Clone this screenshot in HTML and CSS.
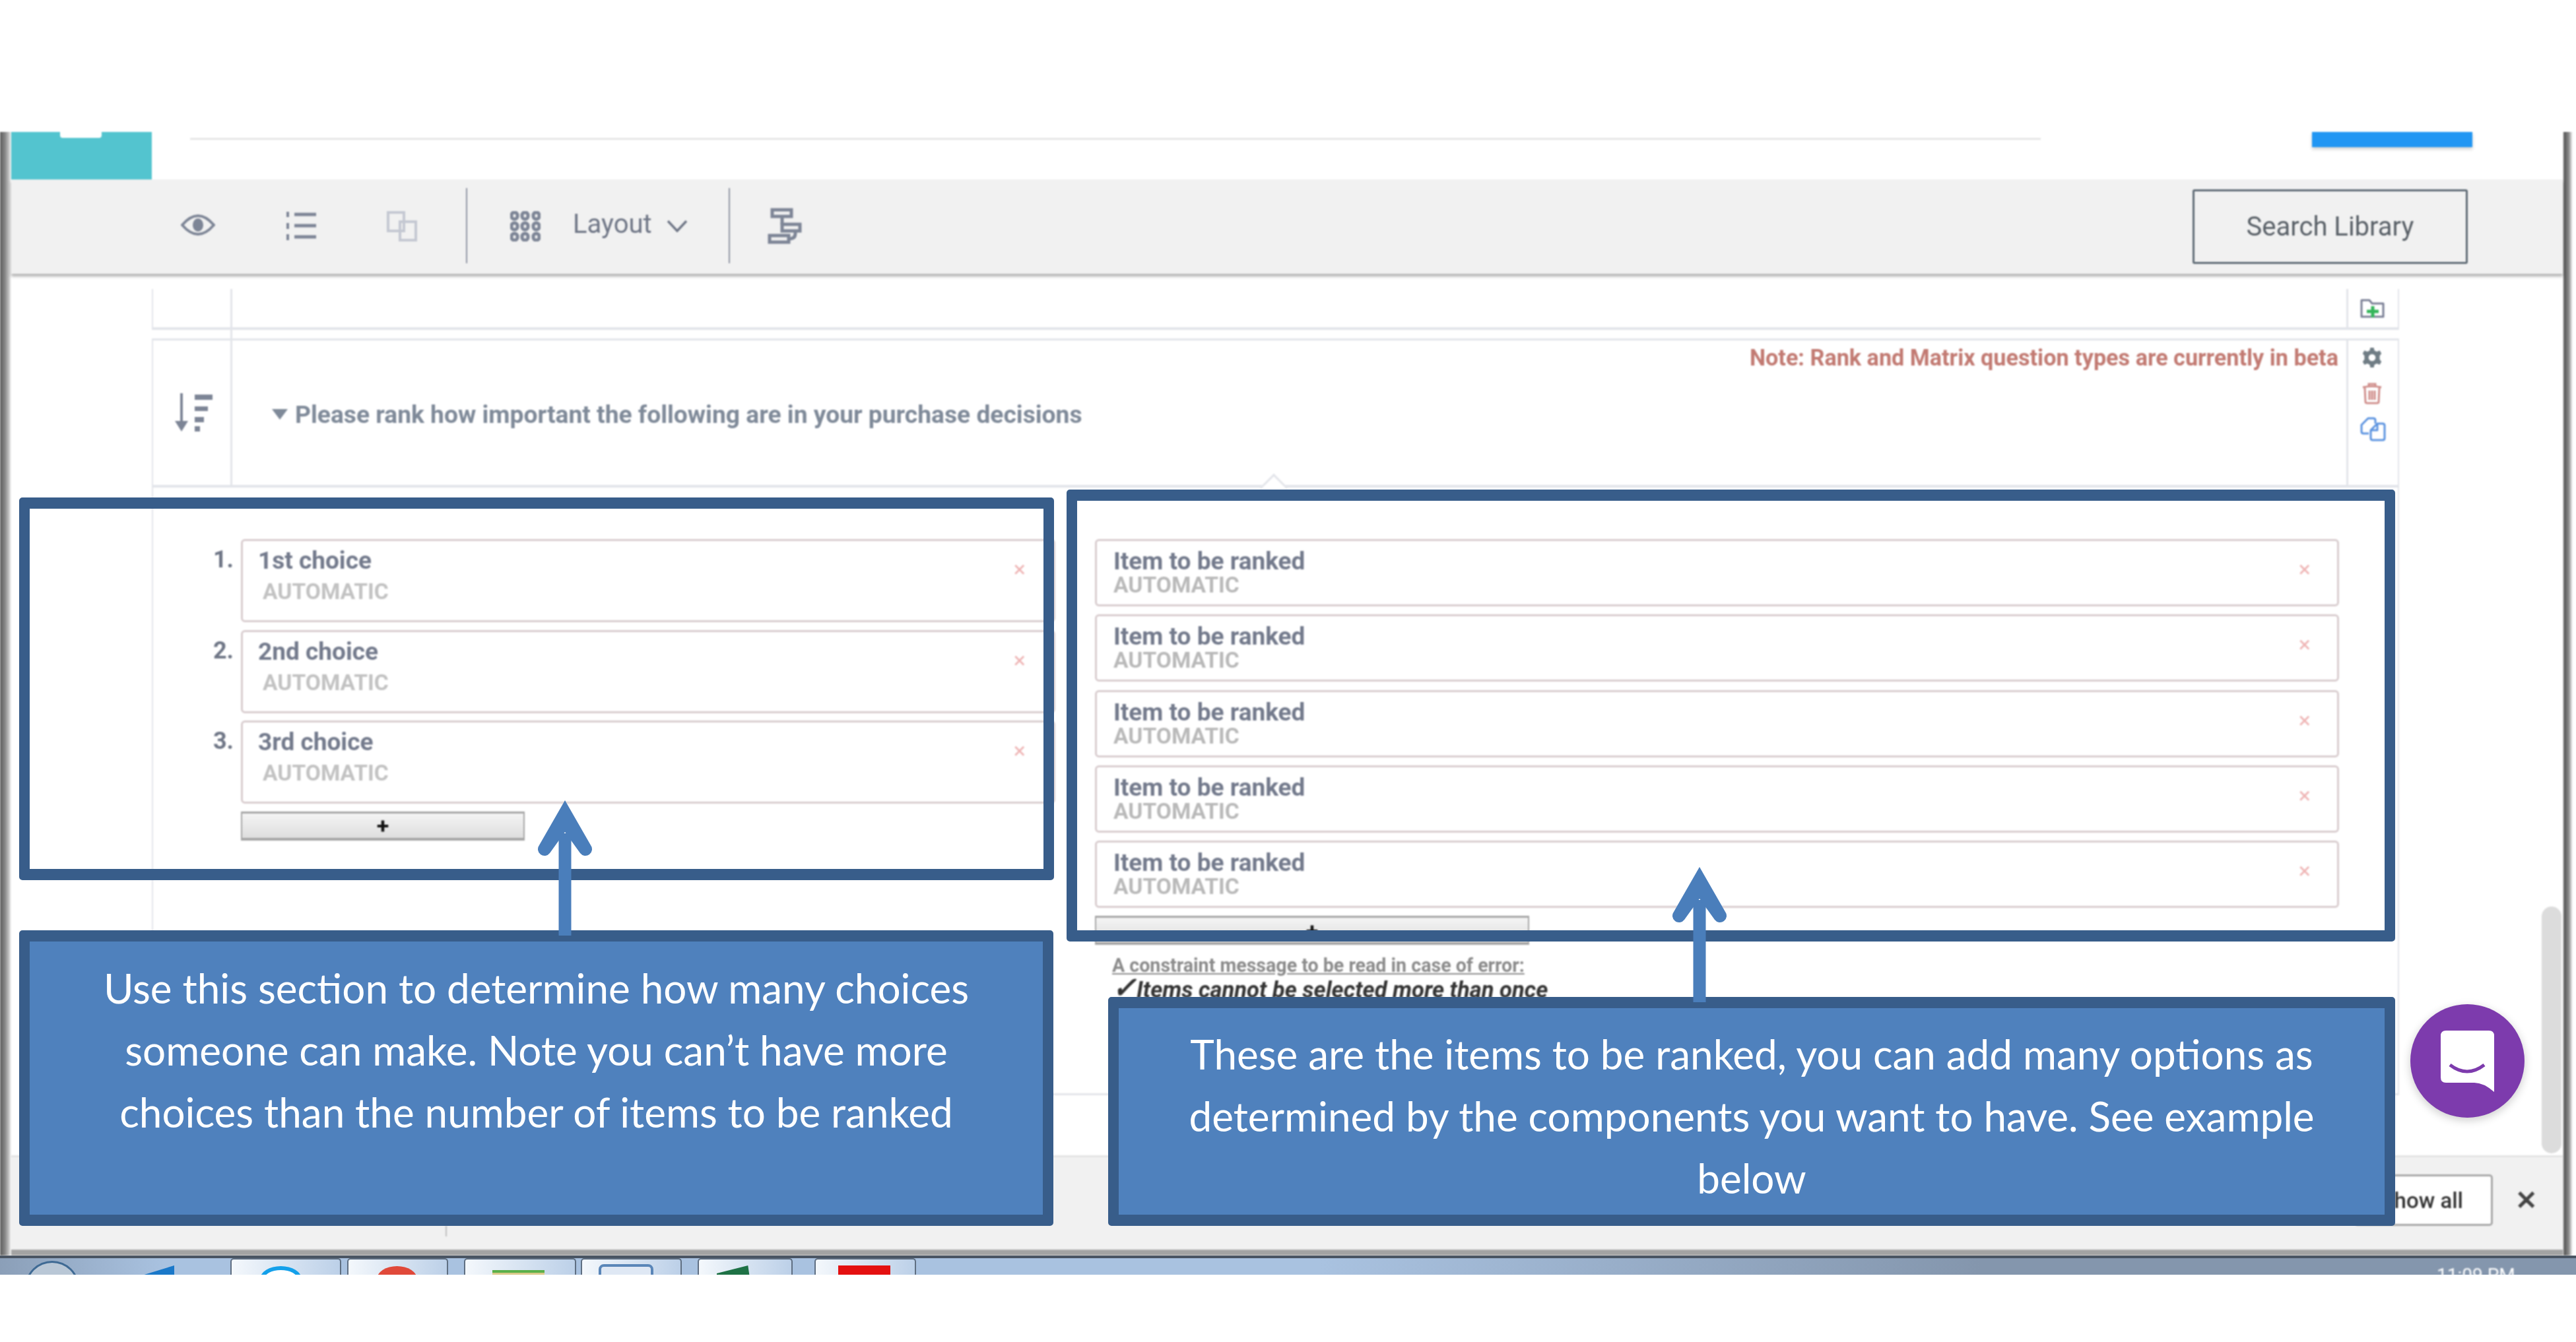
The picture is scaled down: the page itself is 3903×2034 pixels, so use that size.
FILE: index.html
```html
<!DOCTYPE html>
<html lang="en">
<head>
    <meta charset="UTF-8">
    <title>Rank question setup</title>
    <link rel="stylesheet" href="styles.css">
</head>
<body>
<div class="page">
    <div class="window">
        <div class="top-strip">
            <div class="teal-tab"><span class="teal-notch"></span></div>
            <div class="top-line"></div>
            <div class="blue-btn"></div>
        </div>
        <div class="toolbar">
            <svg class="ico ico-eye" viewBox="0 0 52 32"><path d="M2 16 Q14 2 26 2 Q38 2 50 16 Q38 30 26 30 Q14 30 2 16Z" fill="none" stroke="#7d8596" stroke-width="4"/><ellipse cx="26" cy="16" rx="8" ry="10" fill="#7d8596"/></svg>
            <svg class="ico ico-list" viewBox="0 0 45 43"><path d="M2 0v8M2 17v9M2 34v9" stroke="#7d8596" stroke-width="4"/><path d="M12 4h33M12 21h33M12 38h33" stroke="#7d8596" stroke-width="5"/></svg>
            <svg class="ico ico-copy" viewBox="0 0 46 46"><path d="M2 2h24v28H2zM20 16h24v28H20z" fill="none" stroke="#c4c8d2" stroke-width="4"/></svg>
            <span class="tool-sep sep-a"></span>
            <svg class="ico ico-grid" viewBox="0 0 46 46" fill="none" stroke="#7d8596" stroke-width="5"><rect x="2" y="2" width="9" height="10" rx="4"/><rect x="18" y="2" width="9" height="10" rx="4"/><rect x="35" y="2" width="9" height="10" rx="4"/><rect x="2" y="18" width="9" height="10" rx="4"/><rect x="18" y="18" width="9" height="10" rx="4"/><rect x="35" y="18" width="9" height="10" rx="4"/><rect x="2" y="34" width="9" height="10" rx="4"/><rect x="18" y="34" width="9" height="10" rx="4"/><rect x="35" y="34" width="9" height="10" rx="4"/></svg>
            <span class="layout-label">Layout</span>
            <svg class="ico ico-chev" viewBox="0 0 32 19"><path d="M2 2l14 15L30 2" fill="none" stroke="#6f7686" stroke-width="3.5"/></svg>
            <span class="tool-sep sep-b"></span>
            <svg class="ico ico-flow" viewBox="0 0 52 55" fill="none" stroke="#7d8596" stroke-width="5"><rect x="7" y="3" width="29" height="10"/><rect x="22" y="25" width="27" height="10"/><rect x="3" y="42" width="29" height="10"/><path d="M22 13v12M42 35v4q0 8-10 8"/></svg>
            <button class="search-btn">Search Library</button>
        </div>
        <div class="content">
            <div class="survey">
                <div class="q-row q-row-short">
                    <div class="q-type"></div>
                    <div class="q-body"></div>
                    <div class="q-actions">
                        <svg class="ico-folder" viewBox="0 0 37 30"><path d="M2 28V3h12l4 5h17v20z" fill="none" stroke="#7a7f95" stroke-width="3" stroke-linejoin="round"/><path d="M19 12v17M10 20h18" stroke="#34b55a" stroke-width="5"/></svg>
                    </div>
                </div>
                <div class="q-row q-row-tall">
                    <div class="q-type">
                        <svg class="ico-sort" viewBox="0 0 57 58"><path d="M10 0v48" stroke="#7d8596" stroke-width="4"/><path d="M0 42h20L10 58z" fill="#7d8596"/><path d="M30 2h27v8H30zM30 20h20v7H30zM30 36h14v8H30zM30 50h8v8h-8z" fill="#7d8596"/></svg>
                    </div>
                    <div class="q-body">
                        <div class="q-note">Note: Rank and Matrix question types are currently in beta</div>
                        <div class="q-title"><span class="q-caret"></span>Please rank how important the following are in your purchase decisions</div>
                    </div>
                    <div class="q-actions q-actions-col">
                        <svg class="ico-gear" viewBox="0 0 36 36"><path d="M15 1h6l1 5 4 2 5-2 3 5-3 4v6l3 4-3 5-5-2-4 2-1 5h-6l-1-5-4-2-5 2-3-5 3-4v-6l-3-4 3-5 5 2 4-2z" fill="#707d85"/><circle cx="18" cy="18" r="6" fill="#fff"/></svg>
                        <svg class="ico-trash" viewBox="0 0 30 33" fill="none" stroke="#d08f8c" stroke-width="3"><path d="M1 7q14-3 28 0M10 5V2h10v3M4 8l1 21q0 2 3 2h14q3 0 3-2l1-21M11 12v14M19 12v14M15 12v14"/></svg>
                        <svg class="ico-dup" viewBox="0 0 40 37" fill="none" stroke="#5b93e0" stroke-width="3" stroke-linejoin="round"><path d="M14 25H6q-3 0-3-3V12L13 2h8q3 0 3 3v5"/><path d="M17 20L27 10h8q3 0 3 3v19q0 3-3 3H20q-3 0-3-3z"/><path d="M27 10v10H17"/></svg>
                    </div>
                    <span class="q-tip"></span>
                </div>
                <div class="rank-panel">
                    <div class="choices">
                        <div class="choice-row">
                            <span class="choice-num">1.</span>
                            <div class="choice-box"><div class="c-label">1st choice</div><div class="c-auto">AUTOMATIC</div><span class="c-x">×</span></div>
                        </div>
                        <div class="choice-row">
                            <span class="choice-num">2.</span>
                            <div class="choice-box"><div class="c-label">2nd choice</div><div class="c-auto">AUTOMATIC</div><span class="c-x">×</span></div>
                        </div>
                        <div class="choice-row">
                            <span class="choice-num">3.</span>
                            <div class="choice-box"><div class="c-label">3rd choice</div><div class="c-auto">AUTOMATIC</div><span class="c-x">×</span></div>
                        </div>
                        <button class="add-btn add-choice">+</button>
                    </div>
                    <div class="items">
                        <div class="item-box"><div class="i-label">Item to be ranked</div><div class="i-auto">AUTOMATIC</div><span class="c-x">×</span></div>
                        <div class="item-box"><div class="i-label">Item to be ranked</div><div class="i-auto">AUTOMATIC</div><span class="c-x">×</span></div>
                        <div class="item-box"><div class="i-label">Item to be ranked</div><div class="i-auto">AUTOMATIC</div><span class="c-x">×</span></div>
                        <div class="item-box"><div class="i-label">Item to be ranked</div><div class="i-auto">AUTOMATIC</div><span class="c-x">×</span></div>
                        <div class="item-box"><div class="i-label">Item to be ranked</div><div class="i-auto">AUTOMATIC</div><span class="c-x">×</span></div>
                        <button class="add-btn add-item">+</button>
                        <div class="constraint">A constraint message to be read in case of error:</div>
                        <div class="constraint-rule"><span class="rule-check">✓</span>Items cannot be selected more than once</div>
                    </div>
                </div>
            </div>
            <div class="scroll-thumb"></div>
        </div>
        <div class="bottom-bar">
            <span class="bar-tick"></span>
            <button class="show-all">Show all</button>
            <span class="bar-close">✕</span>
        </div>
    </div>
    <div class="taskbar">
        <span class="orb"></span>
        <span class="tb-flag"></span>
        <span class="tb-btn tb-1"><i class="tb-ico i-sky"></i></span>
        <span class="tb-btn tb-2"><i class="tb-ico i-red"></i></span>
        <span class="tb-btn tb-3"><i class="tb-ico i-folder"></i></span>
        <span class="tb-btn tb-4"><i class="tb-ico i-word"></i></span>
        <span class="tb-btn tb-5"><i class="tb-ico i-excel"></i></span>
        <span class="tb-btn tb-6"><i class="tb-ico i-acro"></i></span>
        <span class="tb-clock">11:09 PM</span>
    </div>

    <!-- annotation boxes laid over the screenshot -->
    <div class="outline outline-left"></div>
    <div class="outline outline-right"></div>
    <div class="callout callout-left">Use this section to determine how many choices someone can make. Note you can’t have more choices than the number of items to be ranked</div>
    <div class="callout callout-right">These are the items to be ranked, you can add many options as determined by the components you want to have. See example below</div>
    <svg class="arrow arrow-left" viewBox="0 0 90 206"><path d="M45 50V205" stroke="#4a7ebb" stroke-width="19"/><path d="M45 0L84 68A9 9 0 0 1 68 80L45 48 22 80A9 9 0 0 1 6 68Z" fill="#4a7ebb"/></svg>
    <svg class="arrow arrow-right" viewBox="0 0 90 206"><path d="M45 50V205" stroke="#4a7ebb" stroke-width="19"/><path d="M45 0L84 68A9 9 0 0 1 68 80L45 48 22 80A9 9 0 0 1 6 68Z" fill="#4a7ebb"/></svg>
    <div class="chat-bubble">
        <svg viewBox="0 0 81 93"><path d="M8 0h65q8 0 8 8v85q-16-14-30-14H8q-8 0-8-8V8q0-8 8-8z" fill="#fff"/><path d="M14 52q26 20 52 0" fill="none" stroke="#7d3bad" stroke-width="5"/></svg>
    </div>
</div>
</body>
</html>
```

FILE: styles.css
```css
* { box-sizing: border-box; }
html, body { margin: 0; padding: 0; background: #fff; }
body { font-family: Roboto, "Liberation Sans", sans-serif; }

.page { position: relative; width: 3903px; height: 2034px; padding-top: 200px; overflow: hidden; }

/* browser window */
.window {
    display: flex;
    flex-direction: column;
    height: 1703px;
    padding: 0 20px 0 17px;
    background: linear-gradient(90deg, #5a5a5a 0, #8a8a8a 8px, #c8c8c8 14px, #fff 17px, #fff 3883px, #555 3885px, #8a8a8a 3892px, #fff 3898px);
    filter: blur(1.1px);
}
.top-strip { display: flex; align-items: flex-start; height: 72px; background: #fff; }
.teal-tab { position: relative; width: 213px; height: 72px; background: #53c4cf; }
.teal-notch { position: absolute; left: 74px; top: 0; width: 63px; height: 9px; background: #fff; border-radius: 0 0 4px 4px; }
.top-line { width: 2804px; height: 3px; margin: 9px 0 0 58px; background: #e6e6e6; }
.blue-btn { width: 243px; height: 23px; margin-left: 411px; background: #2196f3; box-shadow: 0 3px 5px rgba(0,0,0,.2); }

.toolbar {
    display: flex;
    align-items: center;
    height: 143px;
    padding-left: 257px;
    background: #f1f1f1;
    box-shadow: 0 4px 4px rgba(0,0,0,.3);
    position: relative;
    z-index: 1;
}
.ico { flex: none; display: block; }
.ico-eye { width: 52px; height: 32px; margin-top: -6px; }
.ico-list { width: 45px; height: 43px; margin-left: 108px; margin-top: -3px; }
.ico-copy { width: 46px; height: 46px; margin-left: 107px; margin-top: -2px; }
.tool-sep { flex: none; width: 2px; height: 114px; background: #8f94a3; margin-top: -3px; }
.sep-a { margin-left: 74px; }
.ico-grid { width: 46px; height: 46px; margin-left: 65px; margin-top: -2px; }
.layout-label { margin-left: 49px; font-size: 40px; color: #6f7686; margin-top: -8px; }
.ico-chev { width: 32px; height: 19px; margin-left: 22px; margin-top: -2px; }
.sep-b { margin-left: 62px; }
.ico-flow { width: 52px; height: 55px; margin-left: 57px; margin-top: -3px; }
.search-btn {
    width: 417px;
    height: 113px;
    margin-left: auto;
    margin-right: 144px;
    background: #f1f1f1;
    border: 3px solid #5f6b75;
    border-radius: 3px;
    font-family: Roboto, sans-serif;
    font-size: 40px;
    color: #5a6168;
}

/* survey */
.content { position: relative; flex: 1; background: #fff; padding: 23px 0 0 213px; }
.survey { width: 3405px; }
.q-row { position: relative; display: flex; border: 3px solid #e3e5ea; border-width: 0 2px 4px 2px; }
.q-row-short { height: 62px; margin-bottom: 13px; }
.q-row-tall { height: 226px; border-top-width: 3px; }
.q-type { flex: none; width: 120px; border-right: 3px solid #e3e5ea; padding: 80px 0 0 33px; }
.ico-sort { display: block; width: 57px; height: 58px; }
.q-body { flex: 1; position: relative; padding: 0 12px; }
.q-note { text-align: right; font-size: 34.2px; font-weight: 700; color: #c27a72; padding-top: 6px; line-height: 40px; }
.q-title { display: flex; align-items: center; margin: 44px 0 0 48px; font-size: 37.2px; font-weight: 700; color: #7f8a99; line-height: 44px; }
.q-caret { width: 0; height: 0; margin-right: 11px; border: 12px solid transparent; border-top: 16px solid #7f8a99; border-bottom: 0; }
.q-actions { flex: none; width: 78px; border-left: 3px solid #e3e5ea; padding: 14px 0 0 18px; }
.ico-folder { display: block; width: 37px; height: 30px; }
.q-actions-col { padding-top: 10px; }
.ico-gear { display: block; width: 36px; height: 32px; margin-left: 0; }
.ico-trash { display: block; width: 30px; height: 33px; margin: 22px 0 0 3px; }
.ico-dup { display: block; width: 40px; height: 37px; margin: 19px 0 0 -1px; }
.q-tip { position: absolute; left: 1683px; bottom: -4px; width: 30px; height: 30px; background: #fff; border: solid #e3e5ea; border-width: 3px 0 0 3px; transform: translateY(15px) rotate(45deg); }

.rank-panel { display: flex; height: 921px; border: solid #e3e5ea; border-width: 0 2px 3px 2px; padding-top: 78px; }
.choices { flex: none; width: 1365px; }
.choice-row { display: flex; margin-bottom: 11.5px; }
.choice-num { flex: none; width: 133px; text-align: right; padding: 10px 11px 0 0; font-size: 36px; font-weight: 700; color: #6f7686; }
.choice-box, .item-box { position: relative; border: 3px solid #d9cdcf; border-radius: 6px; background: #fff; }
.choice-box { flex: 1; height: 126px; padding: 8px 0 0 23px; margin-right: -2px; }
.c-label { font-size: 37px; font-weight: 700; color: #737a8c; line-height: 44px; }
.c-auto { font-size: 33.6px; font-weight: 700; color: #c2c2c2; line-height: 38px; margin: 6px 0 0 7px; }
.c-x { position: absolute; right: 42px; top: 25px; font-size: 34px; line-height: 34px; color: #efb6b6; }
.add-btn {
    display: block;
    background: linear-gradient(#f4f4f4, #dedede);
    border: 1px solid #a5a5a5;
    border-width: 3px 2px 4px;
    font-size: 34px;
    font-weight: 700;
    line-height: 26px;
    color: #111;
    font-family: Roboto, sans-serif;
    padding: 0;
}
.add-choice { width: 430px; height: 44px; margin-left: 133px; }
.items { flex: 1; margin-left: 62px; padding-right: 89px; }
.item-box { height: 102px; margin-bottom: 12.3px; padding: 9px 0 0 25px; }
.i-label { font-size: 37px; font-weight: 700; color: #737a8c; line-height: 44px; }
.i-auto { font-size: 33.6px; font-weight: 700; color: #b9b9b9; line-height: 28px; }
.item-box .c-x { right: 40px; top: 25px; }
.add-item { width: 658px; height: 44px; }
.constraint { width: max-content; margin: 14px 0 0 26px; font-size: 28.6px; font-weight: 700; line-height: 34px; color: #8b8b8b; text-decoration: underline; }
.constraint-rule { margin: 2px 0 0 26px; font-size: 34.6px; font-weight: 700; font-style: italic; line-height: 36px; color: #333; }
.rule-check { font-size: 44px; line-height: 0; }

.scroll-thumb { position: absolute; left: 3834px; top: 959px; width: 30px; height: 374px; border-radius: 15px; background: #dcdcdc; }

/* download bar */
.bottom-bar { position: relative; display: flex; align-items: center; justify-content: flex-end; height: 152px; padding: 0 36px 10px 0; background: #f1f1f1; border-top: 3px solid #e4e4e4; border-bottom: 9px solid #a3a3a3; }
.bar-tick { position: absolute; left: 658px; top: 104px; width: 2px; height: 16px; background: #bdbdbd; }
.show-all { width: 210px; height: 78px; padding: 0 42px 0 0; text-align: right; background: #fff; border: 3px solid #a8a8a8; border-radius: 5px; font-family: Roboto, sans-serif; font-size: 33px; font-weight: 500; color: #333; margin-right: 34px; }
.bar-close { font-size: 40px; color: #444; font-weight: 700; width: 36px; }

/* windows taskbar */
.taskbar {
    position: relative;
    height: 29px;
    overflow: hidden;
    border-top: 4px solid #4a5563;
    background: linear-gradient(90deg, #8b9fb8 0, #a9c2e0 250px, #a9c2e0 2000px, #8496ad 3000px, #8496ad 100%);
}
.orb { position: absolute; left: 38px; top: 4px; width: 82px; height: 80px; border-radius: 50%; border: 3px solid #3f6a94; background: #b9c7d6; }
.tb-flag { position: absolute; left: 212px; top: 11px; width: 52px; height: 40px; background: #1a78c9; clip-path: polygon(100% 0, 100% 100%, 0 100%, 0 40%); }
.tb-btn { position: absolute; top: 0; height: 40px; border: 2px solid #5f6f82; border-bottom: 0; border-radius: 5px 5px 0 0; background: linear-gradient(90deg, #f4f8fc, #bcd0e8); }
.tb-1 { left: 349px; width: 168px; }
.tb-2 { left: 526px; width: 153px; }
.tb-3 { left: 703px; width: 170px; }
.tb-4 { left: 880px; width: 153px; }
.tb-5 { left: 1057px; width: 144px; }
.tb-6 { left: 1234px; width: 154px; }
.tb-ico { position: absolute; display: block; }
.i-sky { top: 10px; left: 43px; width: 63px; height: 40px; border: 6px solid #14a0ea; border-radius: 50%; background: #fff; }
.i-red { top: 10px; left: 43px; width: 61px; height: 40px; background: #e0493a; border-radius: 50%; }
.i-folder { top: 16px; left: 41px; width: 79px; height: 30px; background: #d9c98a; border-top: 4px solid #5bb04a; }
.i-word { top: 7px; left: 25px; width: 83px; height: 40px; border: 4px solid #5a86b8; border-radius: 8px 8px 0 0; background: #dfe8f4; }
.i-excel { top: 9px; left: 27px; width: 86px; height: 30px; background: #1e7145; clip-path: polygon(0 40%, 55% 0, 60% 100%, 0 100%); }
.i-acro { top: 9px; left: 34px; width: 79px; height: 30px; background: #e41010; }
.tb-clock { position: absolute; left: 3692px; top: 11px; font-size: 28px; line-height: 30px; color: #fff; filter: blur(1px); }

/* annotations */
.outline { position: absolute; border: 17px solid #385d8a; border-width: 17px 16px; border-radius: 5px; }
.outline-left { left: 29px; top: 754px; width: 1568px; height: 580px; }
.outline-right { left: 1616px; top: 742px; width: 2013px; height: 685px; }
.arrow { position: absolute; width: 90px; height: 206px; }
.arrow-left { left: 811px; top: 1213px; }
.arrow-right { left: 2530px; top: 1314px; }
.callout {
    position: absolute;
    padding: 23px 60px 0;
    border: 17px solid #385d8a;
    border-width: 17px 16px;
    border-radius: 5px;
    background: #4f81bd;
    font-family: Lato, "Open Sans", sans-serif;
    font-size: 62px;
    line-height: 94px;
    text-align: center;
    color: #fff;
}
.callout-left { left: 29px; top: 1410px; width: 1567px; height: 448px; }
.callout-right { left: 1679px; top: 1511px; width: 1950px; height: 347px; padding-top: 22px; padding-left: 90px; padding-right: 90px; }
.chat-bubble { position: absolute; left: 3652px; top: 1522px; display: flex; align-items: center; justify-content: center; width: 173px; height: 172px; border-radius: 50%; background: #7d3bad; box-shadow: 0 4px 14px rgba(0,0,0,.2); }
.chat-bubble svg { display: block; width: 81px; height: 93px; }
```
